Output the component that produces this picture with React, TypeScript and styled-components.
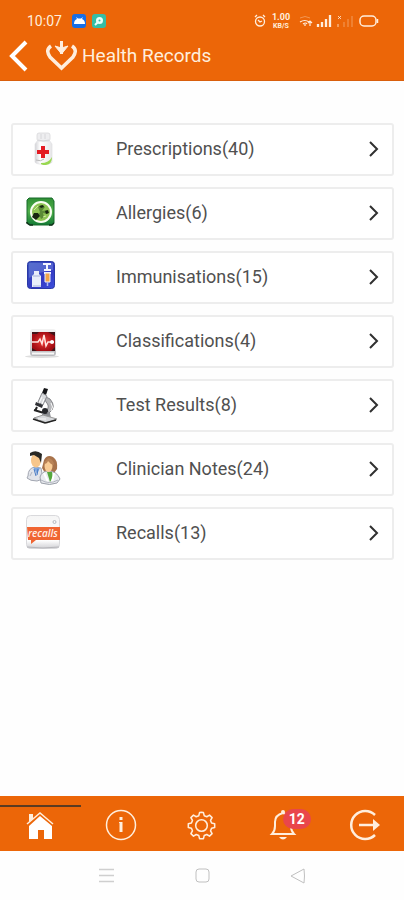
import React from "react";
import styled, { createGlobalStyle } from "styled-components";

const ORANGE = "#ec6608";
const CREAM = "#ffeedd";

const GlobalStyle = createGlobalStyle`
  * { box-sizing: border-box; }
  body { margin: 0; background: #fff; font-family: Roboto, "Liberation Sans", sans-serif; }
  button { font: inherit; border: 0; padding: 0; background: none; color: inherit; cursor: pointer; }
  svg { display: block; }
  ul { list-style: none; margin: 0; padding: 0; }
`;

const Screen = styled.div`
  min-height: 100vh;
  display: flex;
  flex-direction: column;
  background: #fefefe;
`;

const Header = styled.header`
  background: ${ORANGE};
  color: ${CREAM};
  padding-bottom: 8px;
  border-bottom: 1px solid #d95f0c;
`;

const StatusBar = styled.div`
  height: 40px;
  display: flex;
  align-items: center;
  justify-content: space-between;
  padding: 2px 24px 0 27px;
`;

const StatusGroup = styled.div<{ $gap: number }>`
  display: flex;
  align-items: center;
  gap: ${(p) => p.$gap}px;
`;

const Clock = styled.time`
  font-size: 14px;
  line-height: 16px;
  margin-right: 3px;
`;

const Speed = styled.div`
  display: flex;
  flex-direction: column;
  align-items: center;
  width: 18px;
  font-weight: 700;
  font-size: 9px;
  line-height: 10px;
`;

const SpeedUnit = styled.span`
  font-size: 7px;
  line-height: 8px;
`;

const TitleBar = styled.div`
  height: 32px;
  display: flex;
  align-items: center;
  padding-left: 8px;
`;

const BackButton = styled.button`
  width: 22px;
  height: 32px;
  margin-right: 16px;
`;

const Title = styled.h1`
  margin: 0 0 0 5px;
  font-size: 19px;
  line-height: 24px;
  font-weight: 400;
`;

const Main = styled.main`
  flex: 1;
  padding: 42px 10px 16px 11px;
`;

const RecordList = styled.ul`
  display: flex;
  flex-direction: column;
  gap: 11px;
`;

const RecordCard = styled.button`
  width: 100%;
  height: 53px;
  display: flex;
  align-items: center;
  padding: 0 13px 2px 11px;
  background: #fff;
  border: 2px solid #ededed;
  border-radius: 3px;
  text-align: left;
`;

const RecordLabel = styled.span`
  flex: 1;
  margin-left: 52px;
  font-size: 18px;
  line-height: 24px;
  color: #505050;
`;

const TabBar = styled.nav`
  height: 55px;
  background: ${ORANGE};
  color: ${CREAM};
  display: grid;
  grid-template-columns: repeat(5, 1fr);
`;

const Tab = styled.button<{ $active?: boolean }>`
  position: relative;
  display: flex;
  align-items: center;
  justify-content: center;
  padding-top: 3px;

  &::before {
    content: "";
    position: absolute;
    top: 9px;
    left: 0;
    right: 0;
    height: 2px;
    background: ${(p) => (p.$active ? "#5b3b22" : "transparent")};
  }
`;

const Badge = styled.span`
  position: absolute;
  top: 13px;
  left: 50%;
  min-width: 28px;
  height: 20px;
  border-radius: 10px;
  background: #e9464b;
  color: #fff;
  font-size: 14px;
  font-weight: 700;
  line-height: 20px;
  text-align: center;
`;

const SystemBar = styled.nav`
  height: 49px;
  display: flex;
  justify-content: center;
  align-items: center;
  gap: 72px;
`;

const SystemButton = styled.button`
  width: 24px;
  height: 24px;
  display: grid;
  place-items: center;
`;

const BottleIcon = () => (
  <svg width="40" height="40" viewBox="0 0 40 40" aria-hidden="true">
    <defs>
      <linearGradient id="bottle" x1="0" x2="1" y1="0" y2="0">
        <stop offset="0" stopColor="#d2d2d6" />
        <stop offset=".3" stopColor="#fff" />
        <stop offset="1" stopColor="#e6e6e8" />
      </linearGradient>
    </defs>
    <path d="M14 11h11l3 4v18c0 3-17 3-17 0V15z" fill="url(#bottle)" stroke="#e0e0e2" strokeWidth=".7" />
    <rect x="13" y="4" width="13" height="8" rx="2" fill="#eeeef0" stroke="#d8d8db" strokeWidth=".8" />
    <path d="M14 11q5 2 11 0M17 5v5M21 5v5" stroke="#d0d0d4" strokeWidth=".8" fill="none" />
    <path d="M12 31q5 2 8-1" stroke="#bbb" strokeWidth="1" fill="none" />
    <path d="M28 28q-3 6-11 6-1 2 5 2 6-1 6-8z" fill="#98d850" />
    <path d="M17 17h4v4h4v4h-4v4h-4v-4h-4v-4h4z" fill="#e31b23" />
  </svg>
);

const AllergyIcon = () => (
  <svg width="40" height="40" viewBox="0 0 40 40" aria-hidden="true">
    <defs>
      <linearGradient id="allergy" x1="0" x2="0" y1="0" y2="1">
        <stop offset="0" stopColor="#2f8f35" />
        <stop offset=".5" stopColor="#51b04a" />
        <stop offset="1" stopColor="#127a35" />
      </linearGradient>
    </defs>
    <path d="M5 5h23l2 3v22l-2 2H6l-3-2V7z" fill="url(#allergy)" stroke="#176b2b" />
    <path d="M3 29v1l3 2h3M25 32h3l2-2" fill="none" stroke="#12331b" strokeWidth="1.5" />
    <circle cx="17" cy="19" r="10" fill="#8fc454" stroke="#fafff2" strokeWidth="2" />
    <path d="M16 19l-2-5 4-2 3 2-3 4 5-1 1 4-5-1 1 4-3 2-2-5z" fill="#5a8a36" />
    <path d="M15 13l4-1 1 2-3 1zM10 20h4l2 3-4 4-4-3zM21 18l3-1 1 3-3 1z" fill="#17260f" />
    <path d="M10 17l4-4M19 24l3-1" stroke="#d1e8a2" />
  </svg>
);

const VaccineIcon = () => (
  <svg width="40" height="40" viewBox="0 0 40 40" aria-hidden="true">
    <defs>
      <linearGradient id="vaccine" x1="0" x2="1" y1="0" y2="1">
        <stop offset="0" stopColor="#3c55bd" />
        <stop offset=".6" stopColor="#3439c3" />
        <stop offset="1" stopColor="#3c50dc" />
      </linearGradient>
    </defs>
    <rect x="3.5" y="4.5" width="27" height="27" rx="3" fill="url(#vaccine)" stroke="#2939a5" />
    <path d="M5 6h24v7q-12 1-24 8z" fill="#718adc" opacity=".5" />
    <path d="M10 14h5v3l2 2v11H8V19l2-2z" fill="#e9effa" />
    <path d="M9 19h7M9 29h8" stroke="#a7b4d8" />
    <path d="M19 7h8M23 7v5M20 13h7M20 16h7" stroke="#f4f6ff" strokeWidth="2" />
    <path d="M21 16h5v9h-5z" fill="#f0a449" stroke="#e8edff" />
    <path d="M23.5 25v4" stroke="#aeb8ef" strokeWidth="1.5" />
  </svg>
);

const PulseIcon = () => (
  <svg width="40" height="40" viewBox="0 0 40 40" aria-hidden="true">
    <defs>
      <radialGradient id="pulse">
        <stop offset="0" stopColor="#ef3a35" />
        <stop offset="1" stopColor="#a30d14" />
      </radialGradient>
      <linearGradient id="pulseFrame" x1="0" x2="0" y1="0" y2="1">
        <stop offset="0" stopColor="#f3f3f3" />
        <stop offset="1" stopColor="#b9b9bd" />
      </linearGradient>
    </defs>
    <ellipse cx="18" cy="35.5" rx="17" ry="1.5" fill="#dedede" />
    <rect x="6" y="8" width="26" height="27" rx="3" fill="url(#pulseFrame)" />
    <rect x="8" y="11" width="23" height="19" fill="url(#pulse)" />
    <path d="M8 11h7l-2 2H8zM24 11h7v4zM8 27v3h5zM31 26v4h-4z" fill="#401519" />
    <path d="M8 21h6l2-3 2 5 2-9 2 11 2-4h6" fill="none" stroke="#ffe4e0" strokeWidth="1.5" />
    <circle cx="28" cy="21" r="2" fill="#fff" />
    <path d="M8 32.5h22" stroke="#f8f8f8" strokeWidth="2" />
  </svg>
);

const MicroscopeIcon = () => (
  <svg width="40" height="40" viewBox="0 0 40 40" aria-hidden="true">
    <path d="M20 11l6 3q7 8-1 14l-2-3q3-4-1-8z" fill="#b6b7ba" stroke="#85868a" />
    <path d="M20 3l4 1-2 6-4-2z" fill="#151618" />
    <path d="M18 8l5 3-4 9-5-3z" fill="#d8dadd" stroke="#8b8c90" />
    <path d="M18 12l-3 6M20 14l-2 5" stroke="#fff" />
    <path d="M12 17l7 3-1 3-7-3z" fill="#303136" />
    <path d="M13 22l-2 4M10 25l10 3" stroke="#222" strokeWidth="2" />
    <path d="M18 28h8l1 5h-9z" fill="#8d8f94" />
    <path d="M10 33l9-3 14 4-10 4z" fill="#d7d9dc" stroke="#999" />
    <path d="M9 34l12 4 11-3" fill="none" stroke="#222" strokeWidth="1.5" />
    <circle cx="21" cy="26" r="3" fill="#26272b" />
    <path d="M27 18q3 4 0 8M14 34h8" stroke="#fafafa" fill="none" />
  </svg>
);

const CliniciansIcon = () => (
  <svg width="40" height="40" viewBox="0 0 40 40" aria-hidden="true">
    <path d="M4 27q0-8 7-9l6 1 2 11-6 2q-7 0-10-3z" fill="#e1e4ea" stroke="#a2a6b1" />
    <path d="M9 18l4 7 3-6z" fill="#7da6df" />
    <path d="M10 20l2 7M14 20l-1 6" stroke="#497bc4" />
    <ellipse cx="12" cy="11.5" rx="5" ry="7" fill="#f7c68b" />
    <path d="M6 6V4q6-4 12 1l-1 9-2-5-5-3-4 1z" fill="#292824" />
    <path d="M20 11q3-6 9-3 5 3 4 12l-3 4h-9l-3-5z" fill="#a8734b" />
    <path d="M17 34l-1-6q2-6 8-6 9 0 12 8l-3 4q-7 3-16 0z" fill="#e9ebef" stroke="#9ba0a9" />
    <path d="M23 23l3 10 3-5-1-5z" fill="#54a83d" />
    <path d="M20 24l4 9M30 24l-2 9" stroke="#fff" strokeWidth="2" />
    <ellipse cx="24.5" cy="17" rx="4" ry="6" fill="#f9cc95" />
    <path d="M20 15q2-5 5-6 5 2 5 7-4-1-6-4-1 3-4 3z" fill="#b98357" />
    <path d="M6 27l2-4M17 31q8 5 17 0" stroke="#b0b4bf" fill="none" />
  </svg>
);

const RecallText = styled.text`
  font: italic 600 10px "Open Sans", Roboto, sans-serif;
  fill: #fff0e8;
`;

const RecallsIcon = () => (
  <svg width="40" height="40" viewBox="0 0 40 40" aria-hidden="true">
    <defs>
      <linearGradient id="recall" x1="0" x2="0" y1="0" y2="1">
        <stop offset="0" stopColor="#f5f5f5" />
        <stop offset=".75" stopColor="#fff" />
        <stop offset="1" stopColor="#d0d0d4" />
      </linearGradient>
    </defs>
    <rect x="2.5" y="2.5" width="33" height="33" rx="4" fill="url(#recall)" stroke="#d9d9dc" />
    <path d="M3 34q16 2 32 0" stroke="#b5b5ba" fill="none" />
    <circle cx="30.5" cy="9" r="1.5" fill="none" stroke="#b5bac0" />
    <path d="M3 14h33v13H12l-5 4v-4H4z" fill="#f06532" />
    <RecallText x="4" y="24">recalls</RecallText>
  </svg>
);

const ChevronRight = () => (
  <svg width="12" height="18" viewBox="0 0 12 18" fill="none" stroke="#303030" strokeWidth="2" aria-hidden="true">
    <path d="M3 2l7 7-7 7" />
  </svg>
);

const records = [
  { label: "Prescriptions", count: 40, Icon: BottleIcon },
  { label: "Allergies", count: 6, Icon: AllergyIcon },
  { label: "Immunisations", count: 15, Icon: VaccineIcon },
  { label: "Classifications", count: 4, Icon: PulseIcon },
  { label: "Test Results", count: 8, Icon: MicroscopeIcon },
  { label: "Clinician Notes", count: 24, Icon: CliniciansIcon },
  { label: "Recalls", count: 13, Icon: RecallsIcon },
];

const StatusIcons = () => (
  <StatusGroup $gap={6}>
    <svg width="12" height="14" viewBox="0 0 12 14" fill="none" stroke={CREAM} strokeWidth="1.3">
      <circle cx="6" cy="7.5" r="4.5" />
      <path d="M1 3l2-2M11 3L9 1M4 6l2 2 2-1" />
    </svg>
    <Speed>
      <span>1.00</span>
      <SpeedUnit>KB/S</SpeedUnit>
    </Speed>
    <svg width="84" height="14" viewBox="0 0 84 14" fill="none" stroke={CREAM}>
      <path d="M4 4q5-3 10 0" opacity=".35" />
      <path d="M4 8q5-3 9 0M7 10q3-2 4 0M9 10v2M14 7v5M12 9l2-2 2 2" strokeWidth="1.2" />
      <path d="M22 10v3M26 8v5M30 5v8M34 1v12" strokeWidth="2.3" />
      <path d="M42 2l3 3M45 2l-3 3M42 10v3" opacity=".8" />
      <path d="M48 8v5M52 5v8M56 2v11" strokeWidth="2" opacity=".2" />
      <rect x="64" y="2" width="16" height="10" rx="4" strokeWidth="1.5" />
      <path d="M81.5 5v4" strokeWidth="1.5" />
    </svg>
  </StatusGroup>
);

const GEAR =
  "M12 1.8l1.5.2.6 2.4 2 .8 2.1-1.2 2 1.9-1.2 2.2.8 2 2.4.6v2.8l-2.4.6-.8 2 1.2 2.2-2 1.9-2.1-1.2-2 .8-.6 2.4h-3l-.6-2.4-2-.8-2.1 1.2-2-1.9L5 16.100l-.8-2-2.400-.6v-2.800l2.400-.6.8-2-1.200-2.200 2-1.900 2.100 1.200 2-.8.6-2.400z";

export default function App() {
  return (
    <>
      <GlobalStyle />
      <Screen>
        <Header>
          <StatusBar>
            <StatusGroup $gap={7}>
              <Clock>10:07</Clock>
              <svg width="34" height="14" viewBox="0 0 34 14" aria-hidden="true">
                <rect width="14" height="14" rx="3" fill="#176ee5" />
                <path d="M2 10q0-4 3-5L4 3l2 1.5h3L11 3l-1 2q3 1 3 5z" fill="#fff" />
                <rect x="20" width="14" height="14" rx="3" fill="#35bda5" />
                <circle cx="27.5" cy="6.5" r="3.5" fill="#e9fff8" />
                <path d="M23 11l3-3" stroke="#e9fff8" strokeWidth="2" />
                <circle cx="27.5" cy="6.5" r="1" fill="#35bda5" />
              </svg>
            </StatusGroup>
            <StatusIcons />
          </StatusBar>
          <TitleBar>
            <BackButton aria-label="Back">
              <svg width="22" height="32" viewBox="0 0 22 32" fill="none" stroke="#fff" strokeWidth="4">
                <path d="M18 2L4 16l14 14" />
              </svg>
            </BackButton>
            <svg width="31" height="30" viewBox="0 0 31 30" fill="none" stroke={CREAM} aria-hidden="true">
              <path d="M5 5Q-1 9 4 16l11.500 11L27 16q5-7-1-11" strokeWidth="3.5" />
              <path d="M15.500 0v13" strokeWidth="3" />
              <path d="M9 5l6.500 2L22 5l-6.500 8z" fill={CREAM} strokeWidth="1" strokeLinejoin="round" />
            </svg>
            <Title>Health Records</Title>
          </TitleBar>
        </Header>
        <Main>
          <RecordList>
            {records.map(({ label, count, Icon }) => (
              <li key={label}>
                <RecordCard>
                  <Icon />
                  <RecordLabel>{`${label}(${count})`}</RecordLabel>
                  <ChevronRight />
                </RecordCard>
              </li>
            ))}
          </RecordList>
        </Main>
        <TabBar>
          <Tab $active aria-label="Home" aria-current="page">
            <svg width="30" height="30" viewBox="0 0 30 30" fill="none">
              <path d="M2 14L15 3l13 11" stroke={CREAM} strokeWidth="1.5" />
              <path d="M4 4h4v5l-4 3z" fill={CREAM} />
              <path d="M4 16L15 6l12 10v13h-8v-9h-6v9H4z" fill="#fff" />
            </svg>
          </Tab>
          <Tab aria-label="Information">
            <svg width="32" height="32" viewBox="0 0 32 32" fill="none" stroke={CREAM}>
              <circle cx="16" cy="16" r="14.5" strokeWidth="1.5" />
              <path d="M16 13v10" strokeWidth="3" />
              <path d="M14 13.5h2" strokeWidth="1" />
              <path d="M16 8v3" strokeWidth="3" />
            </svg>
          </Tab>
          <Tab aria-label="Settings">
            <svg width="31" height="31" viewBox="0 0 24 24" fill="none" stroke={CREAM} strokeWidth="1.2" strokeLinejoin="round">
              <path d={GEAR} />
              <circle cx="12" cy="12" r="4.5" />
            </svg>
          </Tab>
          <Tab aria-label="Notifications, 12 new">
            <svg width="28" height="32" viewBox="0 0 28 32" fill="none" stroke={CREAM} strokeWidth="2">
              <path d="M3 25q3-3 3-8v-4q0-7 8-9 8 2 8 9v4q0 5 3 8z" />
              <circle cx="14" cy="3" r="1" />
              <path d="M10 28q4 5 8 0z" fill={CREAM} stroke="none" />
            </svg>
            <Badge>12</Badge>
          </Tab>
          <Tab aria-label="Log out">
            <svg width="34" height="34" viewBox="0 0 34 34" fill="none" stroke={CREAM} strokeWidth="2.5">
              <path d="M28 7A14 14 0 1 0 28 27" />
              <path d="M12 17h17" />
              <path d="M26 11l7 6-7 6z" fill={CREAM} stroke="none" />
            </svg>
          </Tab>
        </TabBar>
        <SystemBar aria-label="System">
          <SystemButton aria-label="Recent apps">
            <svg width="15" height="15" viewBox="0 0 15 15" stroke="#cfcfcf">
              <path d="M0 1.5h15M0 7.5h15M0 13.5h15" strokeWidth="1.5" />
            </svg>
          </SystemButton>
          <SystemButton aria-label="System home">
            <svg width="15" height="15" viewBox="0 0 15 15" fill="none" stroke="#c0c0c0">
              <rect x="1" y="1" width="13" height="13" rx="3" />
            </svg>
          </SystemButton>
          <SystemButton aria-label="System back">
            <svg width="16" height="16" viewBox="0 0 16 16" fill="none" stroke="#c0c0c0" strokeLinejoin="round">
              <path d="M1 8l13-7q1 7 0 14z" />
            </svg>
          </SystemButton>
        </SystemBar>
      </Screen>
    </>
  );
}
